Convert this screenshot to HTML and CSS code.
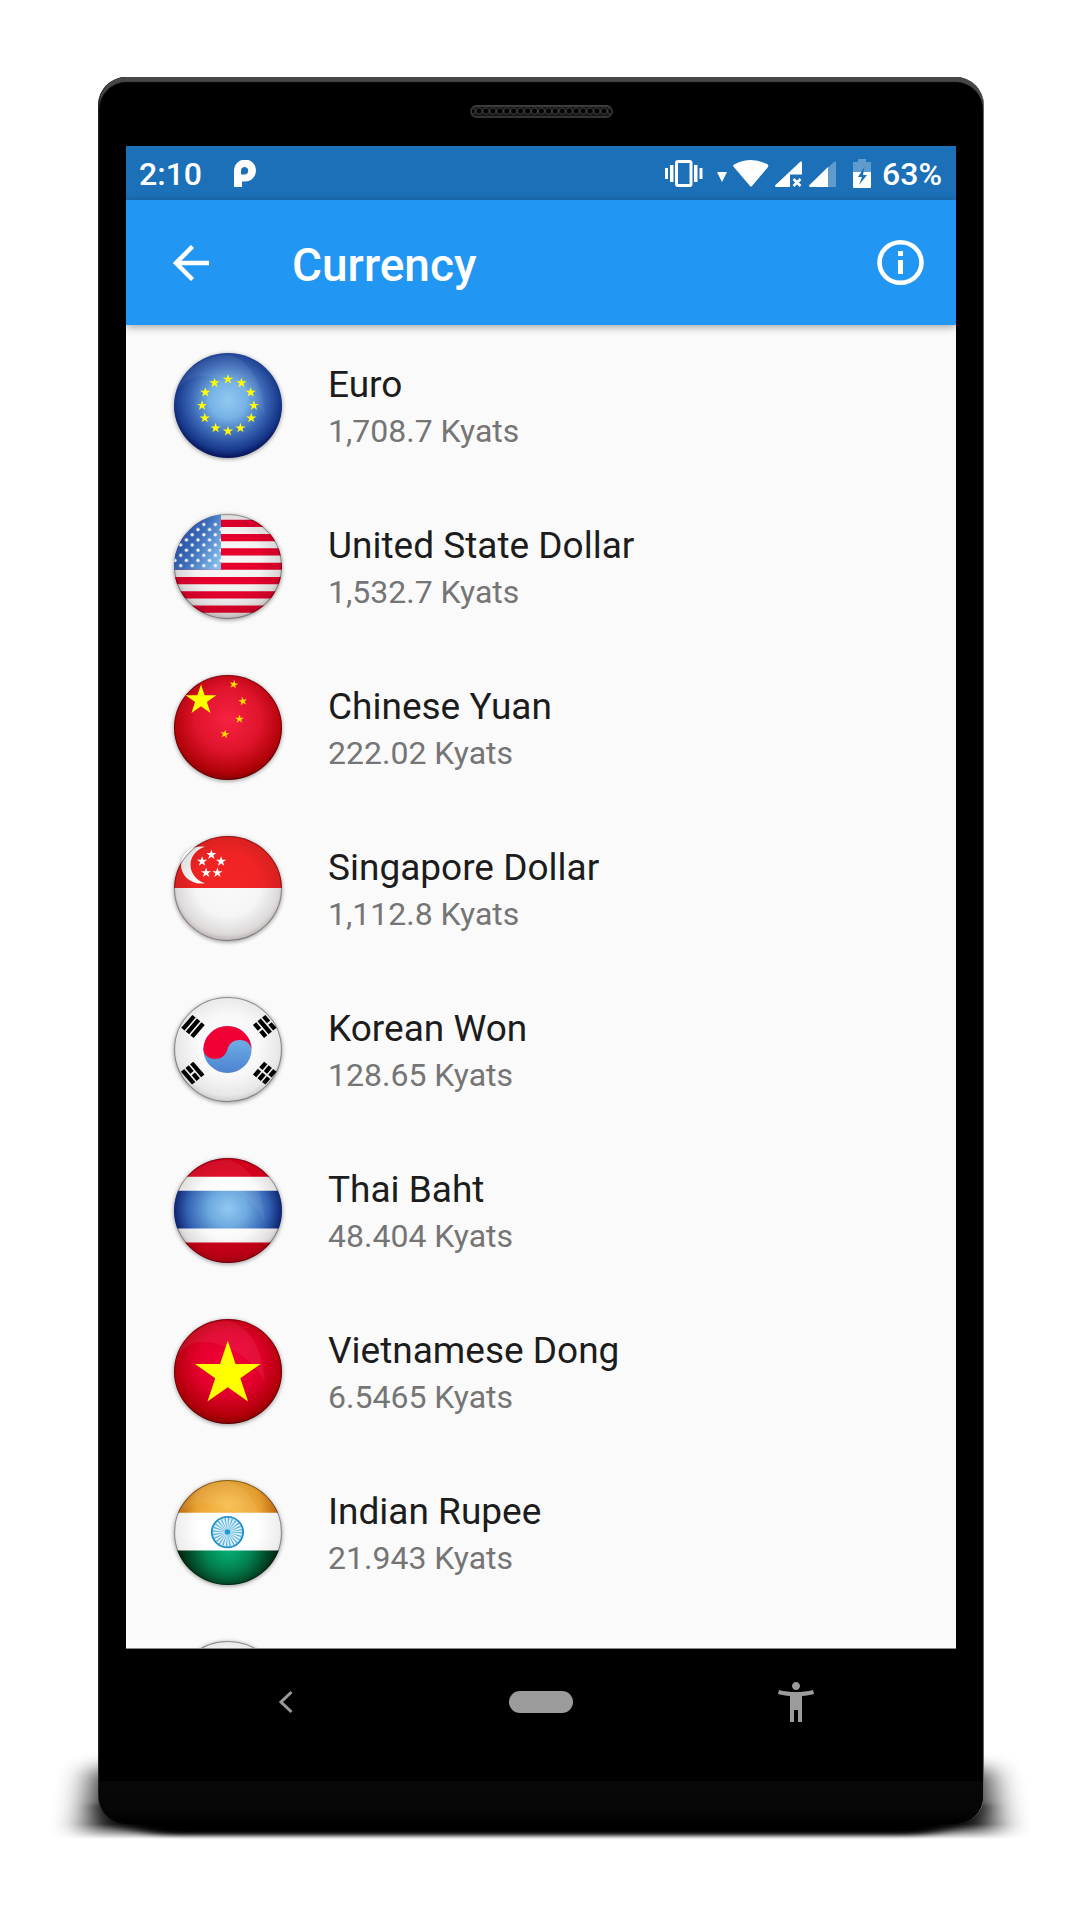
FILE: index.html
```html
<!DOCTYPE html>
<html lang="en">
<head>
<meta charset="utf-8">
<meta name="viewport" content="width=device-width, initial-scale=1">
<title>Currency</title>
<link rel="stylesheet" href="styles.css">
</head>
<body>
<svg class="defs" aria-hidden="true">
  <defs>
    <clipPath id="disc"><circle cx="50" cy="50" r="50"/></clipPath>
    <path id="star" d="M0-10 2.25-3.09 9.51-3.09 3.63 1.18 5.88 8.09 0 3.82-5.88 8.09-3.63 1.18-9.51-3.09-2.25-3.09z"/>
    <radialGradient id="blue" cx=".5" cy=".45" r=".56">
      <stop offset="0" stop-color="#92c8f2"/><stop offset=".3" stop-color="#76b3e6"/><stop offset=".62" stop-color="#3a66b4"/><stop offset=".86" stop-color="#17388a"/><stop offset="1" stop-color="#040c50"/>
    </radialGradient>
    <radialGradient id="crimson" cx=".5" cy=".42" r=".6">
      <stop offset="0" stop-color="#f62242"/><stop offset=".5" stop-color="#e0142c"/><stop offset=".85" stop-color="#b00208"/><stop offset="1" stop-color="#7a0000"/>
    </radialGradient>
    <radialGradient id="scarlet" cx=".5" cy=".42" r=".6">
      <stop offset="0" stop-color="#f4003a"/><stop offset=".5" stop-color="#e2002c"/><stop offset=".85" stop-color="#b00008"/><stop offset="1" stop-color="#7a0000"/>
    </radialGradient>
    <radialGradient id="blueband" gradientUnits="userSpaceOnUse" cx="50" cy="48" r="50">
      <stop offset="0" stop-color="#92c8f2"/><stop offset=".35" stop-color="#6eabe0"/><stop offset=".75" stop-color="#3463b4"/><stop offset="1" stop-color="#0e2470"/>
    </radialGradient>
    <linearGradient id="canton" x1="0" y1=".2" x2="1" y2=".8">
      <stop offset="0" stop-color="#1c3f92"/><stop offset=".5" stop-color="#3c6dba"/><stop offset="1" stop-color="#86bfec"/>
    </linearGradient>
    <radialGradient id="orange" gradientUnits="userSpaceOnUse" cx="50" cy="26" r="50">
      <stop offset="0" stop-color="#f7be50"/><stop offset=".6" stop-color="#eda431"/><stop offset="1" stop-color="#c06408"/>
    </radialGradient>
    <radialGradient id="green" gradientUnits="userSpaceOnUse" cx="50" cy="65" r="44">
      <stop offset="0" stop-color="#04b277"/><stop offset=".5" stop-color="#038452"/><stop offset="1" stop-color="#003114"/>
    </radialGradient>
    <radialGradient id="shade" cx=".5" cy=".46" r=".56">
      <stop offset="0" stop-color="#000" stop-opacity="0"/><stop offset=".55" stop-color="#000" stop-opacity=".02"/><stop offset=".85" stop-color="#200" stop-opacity=".13"/><stop offset="1" stop-color="#200" stop-opacity=".34"/>
    </radialGradient>
    <radialGradient id="paleshade" cx=".5" cy=".46" r=".56">
      <stop offset=".5" stop-color="#000" stop-opacity="0"/><stop offset=".85" stop-color="#000" stop-opacity=".07"/><stop offset="1" stop-color="#000" stop-opacity=".22"/>
    </radialGradient>
    <pattern id="cantonstars" patternUnits="userSpaceOnUse" x="35.6" y="7.5" width="10.7" height="9.8">
      <circle cx="2.7" cy="2.4" r="1.5" fill="#fff"/><circle cx="8" cy="7.3" r="1.5" fill="#fff"/>
    </pattern>
    <linearGradient id="sky" x1="0" y1="0" x2="0" y2="1"><stop offset="0" stop-color="#7cc0f0"/><stop offset="1" stop-color="#4c83cf"/></linearGradient>
    <g id="edge"><circle cx="50" cy="50" r="49.5" fill="none" stroke="#000" stroke-opacity=".35"/></g>
    <g id="rim"><circle cx="50" cy="50" r="50" fill="url(#shade)"/><use href="#edge"/></g>
    <g id="palerim"><circle cx="50" cy="50" r="50" fill="url(#paleshade)"/><circle cx="50" cy="50" r="49.5" fill="none" stroke="#000" stroke-opacity=".4"/></g>
    <path id="gloss" d="M3 35C10 15 28 2 50 2 70 6 82 28 84 60 70 32 42 20 22 22 12 25 6 30 3 35z" fill="#fff" fill-opacity=".06"/>
    <filter id="softfloor" x="-20%" y="-60%" width="140%" height="220%"><feGaussianBlur stdDeviation="14 2"/></filter>
    <filter id="softside" x="-20%" y="-60%" width="140%" height="220%"><feGaussianBlur stdDeviation="17 8"/></filter>
    <linearGradient id="fade" gradientUnits="userSpaceOnUse" x1="0" y1="80" x2="0" y2="95"><stop offset="0" stop-color="#fff"/><stop offset="1" stop-color="#000"/></linearGradient>
    <mask id="ground" maskUnits="userSpaceOnUse" x="0" y="0" width="1006" height="120"><path d="M0 0h1006v120H0z" fill="url(#fade)"/></mask>
  </defs>
</svg>

<main class="device">
  <svg class="floor" viewBox="0 0 1006 120" preserveAspectRatio="none" aria-hidden="true">
    <g mask="url(#ground)"><path d="M58 24H948L964 120H42z" filter="url(#softside)" opacity=".9"/></g>
    <path d="M66 60H940Q934 86 880 91H126Q72 86 66 60z" filter="url(#softfloor)"/>
  </svg>
  <div class="shell">
    <div class="earpiece-area"><div class="earpiece"></div></div>
    <div class="screen">
      <div class="status">
        <span class="clock">2:10</span>
        <svg class="parking" width="22" height="27" viewBox="0 0 22 27" aria-hidden="true"><path fill="#fff" fill-rule="evenodd" d="M0 27V11A11 11 0 1 1 11 21.500H8V27zM11 7A4 4 0 0 0 7 11V14.500H11A3.800 3.800 0 0 0 11 7z"/></svg>
        <span class="spacer"></span>
        <svg class="vibrate" width="38" height="27" viewBox="0 0 38 27" fill="#fff" aria-hidden="true"><path d="M0 8h3v11H0zM5 5h3.500v17H5zM29 5h3.500v17H29zM34.500 8h3v11h-3z"/><rect x="11.500" y="1.500" width="14.500" height="24" rx="1.500" fill="none" stroke="#fff" stroke-width="3"/></svg>
        <svg class="data" width="11" height="27" viewBox="0 0 11 27" aria-hidden="true"><path fill="#fff" d="M0 12h10L5 22z"/></svg>
        <svg class="wifi" width="36" height="27" viewBox="0 0 36 27" aria-hidden="true"><path fill="#fff" d="M0 6Q0 5 2 4Q18-4 34 4Q36 5 35 7L19 26Q18 27 17 26z"/></svg>
        <svg class="signal" width="28" height="27" viewBox="0 0 28 27" aria-hidden="true"><path fill="#fff" d="M1 27Q-1 26 1 24.500L25 2Q27 0 27 3V14.500H15V27z"/><path d="M18.500 19l7 7M25.500 19l-7 7" stroke="#fff" stroke-width="2.500"/></svg>
        <svg class="signal" width="28" height="27" viewBox="0 0 28 27" aria-hidden="true"><path fill="#fff" fill-opacity=".3" d="M19 7.500L25 2Q27 0 27 3V27H19z"/><path fill="#fff" d="M1 27Q-1 26 1 24.500L19 7V27z"/></svg>
        <svg class="battery" width="18" height="29" viewBox="0 0 18 29" aria-hidden="true"><path fill="#fff" fill-opacity=".3" d="M5 0h8v3h5v10H0V3h5z"/><path fill="#fff" d="M0 13h18v15q0 1-1 1H1q-1 0-1-1z"/><path fill="#1b70b8" d="M11.500 8L5 18h4l-3 8 8-10H10z"/></svg>
        <span class="charge">63%</span>
      </div>
      <header class="appbar">
        <button class="icon-button" type="button" aria-label="Back"><svg width="37" height="36" viewBox="0 0 37 36" aria-hidden="true"><path d="M20.500 1.500L4 18l16.500 16.500M3 18h34" fill="none" stroke="#fff" stroke-width="4.500"/></svg></button>
        <h1 class="title">Currency</h1>
        <button class="icon-button" type="button" aria-label="Information"><svg width="47" height="45" viewBox="0 0 47 45" aria-hidden="true"><ellipse cx="23.500" cy="22.500" rx="21" ry="20.200" fill="none" stroke="#fff" stroke-width="4.600"/><path d="M21 11h5v5h-5zM21 20h5v14h-5z" fill="#fff"/></svg></button>
      </header>
      <ul class="rates">
        <li class="rate">
          <svg class="flag" viewBox="0 0 100 100" preserveAspectRatio="none" aria-hidden="true"><circle cx="50" cy="50" r="50" fill="url(#blue)"/><use href="#gloss"/>
            <g fill="#ff0"><use href="#star" transform="translate(50 25) scale(.5)"/><use href="#star" transform="translate(62.500 28.500) scale(.5)"/><use href="#star" transform="translate(71 37.500) scale(.5)"/><use href="#star" transform="translate(74 50) scale(.5)"/><use href="#star" transform="translate(71.500 62) scale(.5)"/><use href="#star" transform="translate(61.500 71.500) scale(.5)"/><use href="#star" transform="translate(50 74.500) scale(.5)"/><use href="#star" transform="translate(38.500 71.500) scale(.5)"/><use href="#star" transform="translate(28.500 62) scale(.5)"/><use href="#star" transform="translate(26 50) scale(.5)"/><use href="#star" transform="translate(29 37.500) scale(.5)"/><use href="#star" transform="translate(37.500 28.500) scale(.5)"/></g></svg>
          <div class="info"><span class="name">Euro</span><span class="value">1,708.7 Kyats</span></div>
        </li>
        <li class="rate">
          <svg class="flag" viewBox="0 0 100 100" preserveAspectRatio="none" aria-hidden="true"><g clip-path="url(#disc)"><path fill="#f7f7f7" d="M0 0h100v100H0z"/><path fill="#e8002d" d="M0 5.400h100v6.900H0zM0 19h100v6.900H0zM0 32.700h100v6.900H0zM0 46.400h100v6.700H0zM0 59.900h100v6.900H0zM0 73.500h100v6.900H0zM0 87.200h100v6.900H0z"/></g><use href="#rim"/><g clip-path="url(#disc)"><path fill="url(#canton)" d="M0 0h43.500v53H0z"/><path fill="url(#cantonstars)" d="M0 7h43.500v45H0z"/></g></svg>
          <div class="info"><span class="name">United State Dollar</span><span class="value">1,532.7 Kyats</span></div>
        </li>
        <li class="rate">
          <svg class="flag" viewBox="0 0 100 100" preserveAspectRatio="none" aria-hidden="true"><circle cx="50" cy="50" r="50" fill="url(#crimson)"/><use href="#edge"/>
            <g fill="#ff0"><use href="#star" transform="translate(25 24) scale(1.500)"/></g><g fill="#ffe000"><use href="#star" transform="translate(55.300 9) rotate(10) scale(.430)"/><use href="#star" transform="translate(63.700 25) rotate(-10) scale(.430)"/><use href="#star" transform="translate(60.600 42) scale(.430)"/><use href="#star" transform="translate(47 56.300) rotate(10) scale(.430)"/></g></svg>
          <div class="info"><span class="name">Chinese Yuan</span><span class="value">222.02 Kyats</span></div>
        </li>
        <li class="rate">
          <svg class="flag" viewBox="0 0 100 100" preserveAspectRatio="none" aria-hidden="true"><g clip-path="url(#disc)"><path fill="#fafafa" d="M0 49h100v51H0z"/><path fill="#f42424" d="M0 0h100v49.600H0z"/></g><path fill="#fff" d="M28.700 10.200C14 8 6.500 18 6.500 27.600 6.500 38 16 47 28.700 45 20 42 15.300 35 15.300 27.600 15.300 20 20 13 28.700 10.200z"/><use href="#rim"/>
            <g fill="#fff"><use href="#star" transform="translate(34.600 17.800) scale(.5)"/><use href="#star" transform="translate(26 24.200) scale(.5)"/><use href="#star" transform="translate(43.600 24.200) scale(.5)"/><use href="#star" transform="translate(29.700 35) scale(.5)"/><use href="#star" transform="translate(40.200 35) scale(.5)"/></g></svg>
          <div class="info"><span class="name">Singapore Dollar</span><span class="value">1,112.8 Kyats</span></div>
        </li>
        <li class="rate">
          <svg class="flag" viewBox="0 0 100 100" preserveAspectRatio="none" aria-hidden="true"><circle cx="50" cy="50" r="50" fill="#f9f9f9"/><use href="#palerim"/>
            <circle cx="49.500" cy="50" r="22.300" fill="url(#sky)"/><path fill="#f00034" d="M27.200 50C28 61 46 63 49.500 50 52 38 70 38 71.800 50A22.300 22.300 0 0 0 27.200 50z"/>
            <g clip-path="url(#disc)"><g transform="translate(17.600 28) rotate(-50)"><path d="M-8-7.500H8v4H-8zM-8-2H8v4H-8zM-8 3.500H8v4H-8z"/></g>
            <g transform="translate(84 28) rotate(50)"><path d="M-8-7.500h7v4h-7zM1-7.500h7v4H1zM-8-2H8v4H-8zM-8 3.500h7v4h-7zM1 3.500h7v4H1z"/></g>
            <g transform="translate(17.300 72.500) rotate(50)"><path d="M-8-7.500H8v4H-8zM-8-2h7v4h-7zM1-2h7v4H1zM-8 3.500H8v4H-8z"/></g>
            <g transform="translate(84 72.500) rotate(-50)"><path d="M-8-7.500h7v4h-7zM1-7.500h7v4H1zM-8-2h7v4h-7zM1-2h7v4H1zM-8 3.500h7v4h-7zM1 3.500h7v4H1z"/></g></g></svg>
          <div class="info"><span class="name">Korean Won</span><span class="value">128.65 Kyats</span></div>
        </li>
        <li class="rate">
          <svg class="flag" viewBox="0 0 100 100" preserveAspectRatio="none" aria-hidden="true"><g clip-path="url(#disc)"><path fill="#e3001f" d="M0 0h100v18H0z"/><path fill="#d00018" d="M0 80h100v20H0z"/><path fill="#fff" d="M0 17.800h100v62.700H0z"/></g><use href="#rim"/><g clip-path="url(#disc)"><path fill="url(#blueband)" d="M0 31.200h100v35.900H0z"/></g><use href="#gloss"/></svg>
          <div class="info"><span class="name">Thai Baht</span><span class="value">48.404 Kyats</span></div>
        </li>
        <li class="rate">
          <svg class="flag" viewBox="0 0 100 100" preserveAspectRatio="none" aria-hidden="true"><circle cx="50" cy="50" r="50" fill="url(#scarlet)"/><use href="#edge"/><use href="#gloss"/><use href="#star" fill="#ff0" transform="translate(49.800 52.700) scale(3.200)"/></svg>
          <div class="info"><span class="name">Vietnamese Dong</span><span class="value">6.5465 Kyats</span></div>
        </li>
        <li class="rate">
          <svg class="flag" viewBox="0 0 100 100" preserveAspectRatio="none" aria-hidden="true"><g clip-path="url(#disc)"><path fill="#fff" d="M0 30h100v40H0z"/><path fill="url(#orange)" d="M0 0h100v31.200H0z"/><path fill="url(#green)" d="M0 67.100h100V100H0z"/></g><use href="#palerim"/><use href="#gloss"/>
            <circle cx="49.500" cy="49.600" r="14.500" fill="#e2f2fa" stroke="#1f93cb" stroke-width="1.800"/><circle cx="49.500" cy="49.600" r="8" fill="none" stroke="#5bb4de" stroke-width="11" stroke-dasharray=".9 1.194"/><circle cx="49.500" cy="49.600" r="2.600" fill="#1f9ad0"/></svg>
          <div class="info"><span class="name">Indian Rupee</span><span class="value">21.943 Kyats</span></div>
        </li>
        <li class="rate">
          <svg class="flag" viewBox="0 0 100 100" preserveAspectRatio="none" aria-hidden="true"><circle cx="50" cy="50" r="50" fill="#f9f9f9"/><use href="#palerim"/></svg>
        </li>
      </ul>
    </div>
    <nav class="navbar">
      <button class="nav-button" type="button" aria-label="Back"><svg width="48" height="48" viewBox="0 0 48 48" aria-hidden="true"><path d="M29.500 14L19 24l10.500 10" fill="none" stroke="#9b9b9b" stroke-width="3"/></svg></button>
      <button class="nav-button" type="button" aria-label="Home"><span class="pill"></span></button>
      <button class="nav-button" type="button" aria-label="Accessibility"><svg width="48" height="48" viewBox="0 0 24 24" aria-hidden="true"><path fill="#9b9b9b" d="M20.500 6c-2.610.7-5.670 1-8.500 1s-5.890-.3-8.500-1L3 8c1.860.5 4 .830 6 1v13h2v-6h2v6h2V9c2-.170 4.140-.5 6-1l-.5-2zM12 6c1.100 0 2-.9 2-2s-.9-2-2-2-2 .9-2 2 .9 2 2 2z"/></svg></button>
    </nav>
    <div class="chin"></div>
  </div>
</main>
</body>
</html>
```
FILE: styles.css
```css
* {
  box-sizing: border-box;
}

body {
  margin: 0;
  background: #fff;
  font-family: Roboto, "Liberation Sans", sans-serif;
}

.defs {
  position: absolute;
  width: 0;
  height: 0;
}

.device {
  position: relative;
  display: flex;
  height: 100vh;
  padding: 77px 96px 96px 98px;
}

.floor {
  position: absolute;
  left: 38px;
  bottom: 56px;
  width: calc(100% - 74px);
  height: 120px;
}

.shell {
  position: relative;
  flex: 1;
  display: flex;
  flex-direction: column;
  min-width: 0;
  overflow: hidden;
  border-left: 1px solid #222;
  border-right: 1px solid #666;
  border-radius: 28px;
  background: #000;
  box-shadow: inset 0 5px 1px #484848;
}

.earpiece-area {
  flex: none;
  display: flex;
  justify-content: center;
  height: 69px;
  padding-top: 28px;
}

.earpiece {
  width: 143px;
  height: 13px;
  border: 2px solid #333;
  border-top-color: #3c3c3c;
  border-radius: 7px;
  background: #161616 radial-gradient(circle at 50% 45%, #000 2px, #3c3c3c 3px, #161616 4px) center / 7px 9px round;
}

.screen {
  flex: 1;
  display: flex;
  flex-direction: column;
  min-height: 0;
  margin: 0 27px;
  border-bottom: 1px solid #888;
  background: #fafafa;
}

.status {
  flex: none;
  display: flex;
  align-items: center;
  height: 54px;
  padding: 1px 14px 0 13px;
  background: #1b70b8;
  color: #fff;
  font-size: 32px;
  font-weight: 500;
}

.parking {
  margin-left: 32px;
}

.spacer {
  flex: 1;
}

.data {
  margin-left: 14px;
}

.wifi {
  margin-left: 5px;
}

.signal {
  margin-left: 6px;
}

.battery {
  margin: 0 11px 0 16px;
}

.appbar {
  position: relative;
  flex: none;
  display: flex;
  align-items: center;
  justify-content: space-between;
  height: 125px;
  padding: 0 32px 0 46px;
  background: #2196f3;
  color: #fff;
  box-shadow: 0 2px 8px rgba(0, 0, 0, 0.35);
}

.icon-button,
.nav-button {
  display: flex;
  align-items: center;
  justify-content: center;
  padding: 0;
  border: 0;
  background: none;
}

.title {
  flex: 1;
  margin: 0;
  padding: 4px 0 0 83px;
  font-size: 46px;
  font-weight: 500;
}

.rates {
  flex: 1;
  min-height: 0;
  margin: 0;
  padding: 0;
  overflow-y: auto;
  scrollbar-width: none;
  list-style: none;
}

.rate {
  display: flex;
  align-items: center;
  gap: 46px;
  height: 161px;
  padding: 0 48px;
}

.flag {
  flex: none;
  width: 108px;
  height: 105px;
  overflow: visible;
  filter: drop-shadow(0 1px 2px rgba(0, 0, 0, 0.4));
}

.info {
  display: flex;
  flex-direction: column;
  padding-top: 2px;
}

.name {
  color: #1c1c1c;
  font-size: 37px;
  line-height: 48px;
}

.value {
  color: #757575;
  font-size: 32px;
  line-height: 44px;
}

.navbar {
  flex: none;
  display: grid;
  grid-template-columns: repeat(3, 1fr);
  height: 132px;
  padding: 0 60px 26px;
}

.pill {
  width: 64px;
  height: 22px;
  border-radius: 11px;
  background: #9b9b9b;
}

.chin {
  flex: none;
  height: 43px;
  background: linear-gradient(#080808, #060606 70%, #000);
}
```
